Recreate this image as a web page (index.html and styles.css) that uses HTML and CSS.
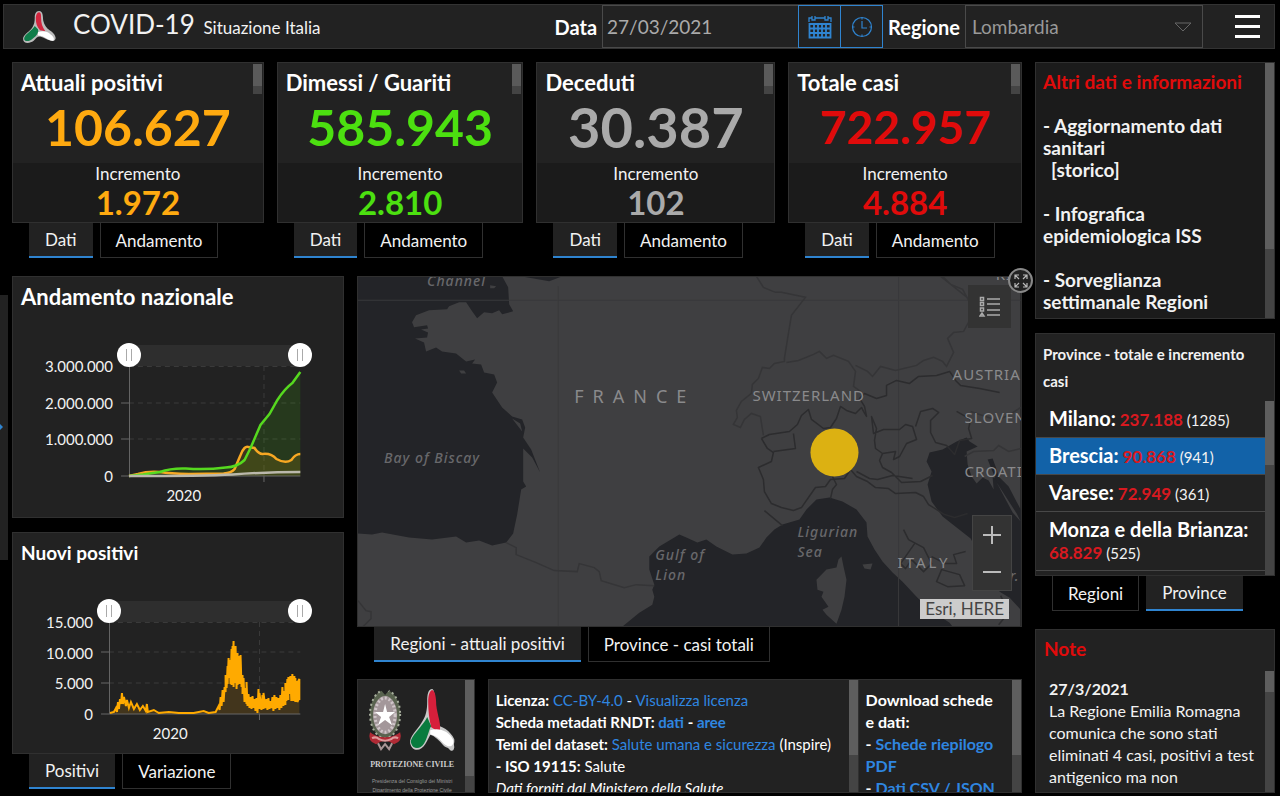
FILE: index.html
```html
<!DOCTYPE html>
<html lang="it">
<head>
    <meta charset="UTF-8">
    <meta name="viewport" content="width=device-width, initial-scale=1">
    <title>COVID-19 Situazione Italia</title>
    <link rel="stylesheet" href="styles.css">
</head>
<body>
    <!-- Intestazione -->
    <header class="header">
        <svg class="header-logo" viewBox="0 0 32 32" aria-hidden="true">
            <path d="M16 1c-3 0-4 3-4 6 0 4-.5 6-2 9-2 4-9 7-9 11 0 5 6 5 10 2 2-2 3-4 6-4 4 1 9 5 13 4 4-2 0-8-4-10-3-2-5-5-6-9-.5-4 0-9-4-9z" fill="#bbb"/>
            <path d="M16 2c-2 0-3 3-3 6 0 4 1 8 4 11l5 1c-3-4-4-8-4-12 0-3 0-6-2-6z" fill="#d3263f"/>
            <path d="M12 15c-2 4-10 8-10 12 0 3 5 3 8 0 4-3 6-6 5-9z" fill="#0f7d4a"/>
            <path d="M15 21c4-2 9-1 12 2 3 2 4 5 2 6-4 0-8-5-14-5z" fill="#fff"/>
        </svg>
        <h1 class="header-title">COVID-19 <small>Situazione Italia</small></h1>
        <div class="filters">
            <label class="filter-label" for="data">Data</label>
            <input class="filter-date" id="data" type="text" value="27/03/2021">
            <button class="icon-button" type="button" aria-label="Calendario">
                <svg width="24" height="24" viewBox="0 0 24 24" fill="none" stroke="#2f84d0" stroke-width="1.3">
                    <path d="M1 7V3h3m3 0h10m3 0h3v4M4 1v4h3V1M17 1v4h3V1"/>
                    <path d="M1.500 9h21v13.500h-21zM1.500 13.500h21M1.500 18h21M6 9v13.500M10 9v13.500M14 9v13.500M18 9v13.500" stroke-width="1.800"/>
                </svg>
            </button>
            <button class="icon-button" type="button" aria-label="Ora">
                <svg width="22" height="22" viewBox="0 0 22 22" fill="none" stroke="#2f84d0" stroke-width="1.200">
                    <circle cx="11" cy="11" r="9.500"/>
                    <path d="M11 5v7h5M11 1.500v2M11 18.500v2M1.500 11h2M18.500 11h2"/>
                </svg>
            </button>
            <label class="filter-label" for="regione">Regione</label>
            <div class="select-wrap">
                <select class="filter-select" id="regione">
                    <option>Lombardia</option>
                </select>
                <svg class="select-arrow" width="18" height="10" viewBox="0 0 18 10" fill="none" stroke="#666"><path d="M1 1h16L9 9z"/></svg>
            </div>
        </div>
        <button class="menu-button" type="button" aria-label="Menu"><span></span><span></span><span></span></button>
    </header>

    <!-- Linguetta laterale -->
    <button class="drawer" type="button" aria-label="Apri pannello"></button>

    <main class="dashboard">
        <div class="main-area">
            <!-- Indicatori -->
            <section class="stats">
                <div class="stat">
                    <div class="stat-card">
                        <h2 class="panel-title">Attuali positivi</h2>
                        <div class="stat-total orange">106.627</div>
                        <div class="stat-delta"><p>Incremento</p><strong class="orange">1.972</strong></div>
                        <span class="stat-scroll"></span>
                    </div>
                    <div class="tabs"><button class="tab active" type="button">Dati</button><button class="tab" type="button">Andamento</button></div>
                </div>
                <div class="stat">
                    <div class="stat-card">
                        <h2 class="panel-title">Dimessi / Guariti</h2>
                        <div class="stat-total green">585.943</div>
                        <div class="stat-delta"><p>Incremento</p><strong class="green">2.810</strong></div>
                        <span class="stat-scroll"></span>
                    </div>
                    <div class="tabs"><button class="tab active" type="button">Dati</button><button class="tab" type="button">Andamento</button></div>
                </div>
                <div class="stat">
                    <div class="stat-card">
                        <h2 class="panel-title">Deceduti</h2>
                        <div class="stat-total grey large">30.387</div>
                        <div class="stat-delta"><p>Incremento</p><strong class="grey">102</strong></div>
                        <span class="stat-scroll"></span>
                    </div>
                    <div class="tabs"><button class="tab active" type="button">Dati</button><button class="tab" type="button">Andamento</button></div>
                </div>
                <div class="stat">
                    <div class="stat-card">
                        <h2 class="panel-title">Totale casi</h2>
                        <div class="stat-total red small">722.957</div>
                        <div class="stat-delta"><p>Incremento</p><strong class="red">4.884</strong></div>
                        <span class="stat-scroll"></span>
                    </div>
                    <div class="tabs"><button class="tab active" type="button">Dati</button><button class="tab" type="button">Andamento</button></div>
                </div>
            </section>

            <div class="lower">
                <!-- Grafici -->
                <div class="charts">
                    <section class="panel chart-panel">
                        <h2 class="panel-title">Andamento nazionale</h2>
                        <div class="chart">
                            <div class="range">
                                <input type="range" min="0" max="100" value="0" aria-label="Inizio periodo">
                                <input type="range" min="0" max="100" value="100" aria-label="Fine periodo">
                            </div>
                            <div class="y-axis"><span>3.000.000</span><span>2.000.000</span><span>1.000.000</span><span>0</span></div>
                            <svg class="plot" viewBox="0 0 172 110" preserveAspectRatio="none">
                                <path class="guide" d="M0 .5H172M0 37H172M0 73H172M135.500 0V110"/>
                                <path d="M0 110L14 108.500 31 106 44 103.500 57 102.500 77 103 97 101.500 109 99.500 116 94 122 82 132 59 141 48 149 34 156 26 164 17 172 6V110z" fill="#4ce600" opacity=".12"/>
                                <path d="M0 110L101 107 106 103 112 89 118 81 126 82 132 88 142 89 151 94.500 157 96 164 93 172 88V110z" fill="#ffaa00" opacity=".12"/>
                                <path class="axis" d="M.5 0V110M-8 37H0M-8 73H0M-8 110H172M135.500 110v6"/>
                                <path d="M0 110L9 108Q19 105 31 106 41 107.500 60 108L95 107.500Q103 107 106 103L112 89Q116 79 120 81L126 82Q130 88 134 88 143 87 148 93 157 98 163 94 167 88 172 88" stroke="#f7a823"/>
                                <path d="M0 110L14 108.500 31 106Q42 102 57 102.500 77 104 97 101.500 109 101 116 94L122 82 132 59 141 48 149 34Q156 23 164 17L172 6" stroke="#56d91f"/>
                                <path d="M0 110Q75 110 104 108.500 140 106 172 106" stroke="#bbb8ac"/>
                            </svg>
                            <span class="x-axis">2020</span>
                        </div>
                    </section>

                    <section>
                        <div class="panel chart-panel daily">
                            <h2 class="panel-title medium">Nuovi positivi</h2>
                            <div class="chart">
                                <div class="range">
                                    <input type="range" min="0" max="100" value="0" aria-label="Inizio periodo">
                                    <input type="range" min="0" max="100" value="100" aria-label="Fine periodo">
                                </div>
                                <div class="y-axis"><span>15.000</span><span>10.000</span><span>5.000</span><span>0</span></div>
                                <svg class="plot" viewBox="0 0 192 92" preserveAspectRatio="none">
                                    <path class="guide" d="M0 .5H192M0 30H192M0 61H192M151 0V92"/>
                                    <path d="M0 92L9 84 13 78 20 84 40 89 107 91 114 80 119 60 126 50 131 60 139 80 150 82 173 80 183 72 191 70V92z" fill="#ffaa00" opacity=".15"/>
                                    <path class="axis" d="M.5 0V92M-8 30H0M-8 61H0M-8 92H192M151 92v6"/>
                                    <path d="M1 91L5 90 7 86 8 90 9 80 10 87 11 77 12 82 13 71 14 82 15 75 17 84 18 78 20 86 22 80 25 87 28 82 31 88 34 84 37 89 38 82 39 90 45 88 50 91 60 90 70 91 85 91 95 89 100 91 107 90 110 84 111 88 112 75 113 84 114 68 115 80 116 65 117 70 117 53 118 66 119 44 119 62 120 36 121 56 121 38 122 62 123 27 123 63 124 24 124 58 125 19 125 65 126 26 127 61 127 24 128 67 129 31 129 63 130 47 131 34 131 62 132 33 133 65 134 53 134 72 135 56 136 80 137 66 138 82 138 60 139 84 140 72 141 86 142 75 143 87 144 74 145 86 146 77 147 89 148 76 149 91 150 67 151 87 151 71 153 88 154 73 155 87 155 71 157 86 158 77 159 88 160 76 161 87 162 79 163 86 164 75 165 89 166 73 167 87 168 75 169 86 170 76 171 88 172 73 173 86 174 65 175 84 176 69 177 83 177 61 178 79 179 57 180 78 180 55 181 72 182 54 183 79 184 52 185 79 186 54 187 80 187 56 188 79 189 59 189 80 190 78 190 59 191 57 191 78" stroke="#ffaa00" stroke-width="2"/>
                                </svg>
                                <span class="x-axis">2020</span>
                            </div>
                        </div>
                        <div class="tabs"><button class="tab active" type="button">Positivi</button><button class="tab" type="button">Variazione</button></div>
                    </section>
                </div>

                <div class="center">
                    <!-- Mappa -->
                    <section class="map-block">
                        <div class="map">
                            <svg class="map-canvas" viewBox="0 0 662 350" preserveAspectRatio="xMidYMid slice">
                                <rect width="662" height="350" fill="#3f3f41"/>
                                <g fill="#232428">
                                    <path d="M0 0H144L150 11 151 28 155 35 144 38 141 34 134 37 126 36 119 42 114 35 108 26 101 26 91 30 89 33 71 34 58 39 54 46 56 51 69 49 70 52 63 53 70 56 69 61 57 62 66 66 68 75 78 71 84 75 98 77 108 85 117 83 114 87 123 88 126 96 136 98 139 106 134 116 144 131 154 140 164 143 167 151 165 161 173 173 182 196 174 181 165 172 165 205 168 210 163 213 159 238 155 257 148 266 134 269 121 264 108 266 98 260 74 263 51 261 24 256 14 258 0 257z"/>
                                    <path d="M163 0L174 2 191 5 204 0z"/>
                                    <path d="M264 350L281 336 294 328 296 320 294 313 296 308 291 293 291 280 301 270 321 258 328 261 339 266 348 263 358 270 374 278 388 277 401 271 408 261 416 253 424 248 441 243 448 233 458 223 471 221 484 225 498 233 508 246 509 260 516 273 524 285 534 296 544 305 558 320 571 333 591 346 594 350z"/>
                                    <path d="M568 185L571 176 584 173 598 165 608 161 611 165 619 170 608 175 609 188 613 200 618 207 624 201 630 204 635 213 634 201 641 201 650 210 662 233V333L651 321 641 315 612 262 598 251 584 240 573 225 569 208 573 195z"/>
                                    <path d="M629 183l5-1 4 11 5 17-5-5z"/>
                                </g>
                                <g fill="#3f3f41">
                                    <path d="M483 280L485 290 488 303 486 320 483 333 478 347 468 338 464 333 470 330 463 320 465 315 459 313 458 303 468 293 478 291 480 283z"/>
                                    <path d="M504 288l10-1-2 6-6-1zM101 94l5 0 2 3-5 0zM132 9l6 1-2 2-4 0zM154 142l8 5 2 8-7-9zM638 206l20 31 4 8-8-9z"/>
                                </g>
                                <g fill="none" stroke="#353537" stroke-width="1.500">
                                    <path d="M200 10V350M540 0V350M0 24H662" stroke="#39393b" stroke-width="1"/>
                                    <path d="M398 0l7 11 12 5 6 0 24 5-14 18-3 18-4 25v3l-10 2-5 5-7-1-4 11-6 6-1 9-10 8-5 9 1 7-4 7 7 3 4-8 7-6 9 3 3 19M428 86l12-2 15-6 6-3 7 7 7-3 15 6 7 10-2 15 7 5M497 89l12 6 5 5 8-10 15 4 21-5 7-5 10-3 9 4 4 5 7-14-6-14 6-6 10-1 6-11V23L582 0M606 180l9-5 20-1 5-5 10 6 12-3M612 135l15 5 12 4 14-7 9-6M584 0l8 8 12 5 6 11"/>
                                    <path d="M148 266l10 5 0 7 20 8 18 8 23 1 2-8 15 4 5 4 2 9 23 7 12-3 18 1M0 324l8 10 5 1v7l-8 8"/>
                                </g>
                                <g fill="none" stroke="#2c2c2e" stroke-width="1.500" stroke-linejoin="round">
                                    <path d="M403 162l8-4 20-3 8-7 4-9 7-6 3 10 12 9 7-1 6-9 4-12 6 4 9 3 6-6 2 4 3 5-2-10-5-8 5-5 12 5 10-3 0-10 10-5 13 3 9-7 18-1 13-4 6 9 5 5 19 3 20 4M403 162l6 10 6 4-2 9-13 6 5 12 1 12 7 12 10 4 12 3 8-3 7-10 7-10 10-1 5-7 14-1 6-9 6 7 11 5 8 6 13 1 7 5 20-1 8 4 5 8 16 10 10 3 13-4"/>
                                    <path d="M415 175l22-3-2-15M513 140l5 12-2 12 1 8 7 5 13-2-2 8 6-3 7-13 10-4-4-13-7-2-6 5-16 0-10 4zM557 150l5-15 12-3 6 4-8 8 0 12 5 10 11 3 8 9 5-14 12-2-3-10 2-9-14-8M524 177l-3 7 3 7 9 5 10 10 19-1 12-6M498 195l13 7 8 1 15-4 20 3M474 200l4 8-4 5-2 9M406 234l18 15M545 253l5 10 15 8 8 16-8 8-12-12-6 9-5-5 14-20M573 280l14 7 11 0-3-9 12-3M578 305l5-12 18 5 5 11-17 1zM640 348l10-12-8-17"/>
                                </g>
                                <circle cx="476" cy="176" r="24" fill="#dcb112"/>
                                <g class="sea-labels">
                                    <text x="69" y="10">Channel</text>
                                    <text x="26" y="186">Bay of Biscay</text>
                                    <text x="297" y="283">Gulf of</text>
                                    <text x="297" y="303">Lion</text>
                                    <text x="439" y="260">Ligurian</text>
                                    <text x="439" y="280">Sea</text>
                                    <text x="651" y="304">r.</text>
                                </g>
                                <g class="country-labels">
                                    <text class="spaced" x="216" y="127">FRANCE</text>
                                    <text x="394" y="125">SWITZERLAND</text>
                                    <text x="594" y="104">AUSTRIA</text>
                                    <text x="606" y="147">SLOVEN</text>
                                    <text x="606" y="200">CROATI</text>
                                    <text class="italy" x="539" y="291">ITALY</text>
                                    <text x="637" y="4">KI</text>
                                </g>
                            </svg>
                            <button class="map-legend" type="button" aria-label="Legenda">
                                <svg width="22" height="22" viewBox="0 0 22 22" fill="none" stroke="#aaa" stroke-width="1.500">
                                    <path d="M8 3h13M8 8h13M8 14h13M8 19h13"/>
                                    <path d="M1.500 1.500h3v3h-3zM1.500 6.500h3v3h-3zM1.500 12h3v3h-3zM1 20l2-3 2 3z"/>
                                </svg>
                            </button>
                            <div class="map-zoom">
                                <button type="button" aria-label="Zoom avanti"><svg width="18" height="18" viewBox="0 0 18 18" stroke="#bbb" stroke-width="2"><path d="M0 9h18M9 0v18"/></svg></button>
                                <button type="button" aria-label="Zoom indietro"><svg width="18" height="18" viewBox="0 0 18 18" stroke="#bbb" stroke-width="2"><path d="M0 9h18"/></svg></button>
                            </div>
                            <span class="map-credits">Esri, HERE</span>
                        </div>
                        <button class="expand" type="button" aria-label="Espandi">
                            <svg width="14" height="14" viewBox="0 0 14 14" fill="none" stroke="#bbb" stroke-width="1.200"><path d="M1 5V1h4M1 1l4 4M9 1h4v4M13 1L9 5M1 9v4h4M1 13l4-4M13 9v4H9M13 13L9 9"/></svg>
                        </button>
                        <div class="tabs"><button class="tab active" type="button">Regioni - attuali positivi</button><button class="tab" type="button">Province - casi totali</button></div>
                    </section>

                    <!-- Piede -->
                    <section class="footer">
                        <div class="panel scroll-panel logo-panel">
                            <svg viewBox="0 0 106 112" preserveAspectRatio="xMidYMin slice">
                                <ellipse cx="27" cy="34" rx="15" ry="24" fill="#59634f"/>
                                <ellipse cx="27" cy="34" rx="15" ry="24" fill="none" stroke="#a9b09f" stroke-width="2" stroke-dasharray="2 3"/>
                                <ellipse cx="27" cy="35" rx="12" ry="19" fill="#a3979a"/>
                                <ellipse cx="27" cy="35" rx="10" ry="17" fill="none" stroke="#d0c6c9" stroke-width="3" stroke-dasharray="2 2"/>
                                <path d="M22 9h10l-5 6z" fill="#222"/>
                                <path d="M12 52q-3 9 6 12 9-7 18 0 9-3 6-12-6 5-15 5t-15-5z" fill="#b02a35"/>
                                <path d="M14 58q4-2 7 1 6 3 12 0 3-3 7-1" fill="none" stroke="#e09a9c" stroke-width="2"/>
                                <path d="M20 63l3 6 4-5 4 5 3-6" fill="none" stroke="#a99696" stroke-width="2"/>
                                <path d="M27 24l2 8h8l-6 5 3 8-7-5-7 5 3-8-6-5h8z" fill="#fff"/>
                                <path d="M74 9c-4 0-5 5-5 12 0 9-1 15-6 22-4 7-12 13-11 20 2 9 11 8 15 1 4-6 5-12 10-14 3 4 7 6 9 11 4 9 9 13 10 6 0-8-7-12-13-18-5-6-5-15-6-24 0-7-1-16-3-16z" fill="#c9c9c9"/>
                                <path d="M71 46c9-3 20 3 25 13 1 9-6 11-11 6-4-5-8-9-14-11z" fill="#c9c9c9"/>
                                <path d="M74 10c-3 1-4 6-4 12 0 9 1 18 3 25l8 5c3-6-2-17-3-27 0-7-1-14-4-15z" fill="#d61f3b"/>
                                <path d="M69 37c-4 9-18 20-16 26 2 7 10 6 13 0 4-7 5-15 7-17z" fill="#087b3e"/>
                                <path d="M72 50c9-3 19 1 23 10 1 7-5 8-10 3-4-5-8-8-13-9z" fill="#fff"/>
                                <text class="logo-name" x="54" y="87">PROTEZIONE CIVILE</text>
                                <text class="logo-sub" x="54" y="103">Presidenza del Consiglio dei Ministri</text>
                                <text class="logo-sub" x="54" y="112">Dipartimento della Protezione Civile</text>
                            </svg>
                            <span class="scrollbar"><i class="thumb thumb-logo"></i></span>
                        </div>
                        <div class="panel scroll-panel">
                            <div class="info">
                                <p><b>Licenza:</b> <a href="#">CC-BY-4.0</a> - <a href="#">Visualizza licenza</a></p>
                                <p><b>Scheda metadati RNDT: <a href="#">dati</a> - <a href="#">aree</a></b></p>
                                <p><b>Temi del dataset:</b> <a href="#">Salute umana e sicurezza</a> (Inspire)</p>
                                <p><b>- ISO 19115:</b> Salute</p>
                                <p><em>Dati forniti dal Ministero della Salute</em></p>
                            </div>
                            <span class="scrollbar"><i class="thumb thumb-info"></i></span>
                        </div>
                        <div class="panel scroll-panel joined">
                            <div class="info downloads">
                                <p>Download schede e dati:</p>
                                <p>- <a href="#">Schede riepilogo PDF</a></p>
                                <p>- <a href="#">Dati CSV / JSON</a></p>
                            </div>
                            <span class="scrollbar"><i class="thumb thumb-info"></i></span>
                        </div>
                    </section>
                </div>
            </div>
        </div>

        <!-- Colonna destra -->
        <aside class="sidebar">
            <section class="panel scroll-panel dark">
                <div class="links">
                    <h2 class="red">Altri dati e informazioni</h2>
                    <p>- <a href="#">Aggiornamento dati sanitari</a><br><a class="indent" href="#">[storico]</a></p>
                    <p>- <a href="#">Infografica epidemiologica ISS</a></p>
                    <p>- <a href="#">Sorveglianza settimanale Regioni</a></p>
                </div>
                <span class="scrollbar"><i class="thumb thumb-links"></i></span>
            </section>

            <section class="provinces">
                <div class="panel province-panel">
                    <h2 class="province-title">Province - totale e incremento casi</h2>
                    <div class="scroll-panel">
                        <ul class="province-list">
                            <li><b>Milano:</b> <strong>237.188</strong> (1285)</li>
                            <li class="selected"><b>Brescia:</b> <strong>90.868</strong> (941)</li>
                            <li><b>Varese:</b> <strong>72.949</strong> (361)</li>
                            <li><b>Monza e della Brianza:</b> <strong>68.829</strong> (525)</li>
                        </ul>
                        <span class="scrollbar"><i class="thumb thumb-province"></i></span>
                    </div>
                </div>
                <div class="tabs"><button class="tab" type="button">Regioni</button><button class="tab active" type="button">Province</button></div>
            </section>

            <section class="panel notes">
                <h2 class="red">Note</h2>
                <div class="scroll-panel">
                    <div class="notes-text">
                        <b>27/3/2021</b>
                        <p>La Regione Emilia Romagna comunica che sono stati eliminati 4 casi, positivi a test antigenico ma non</p>
                    </div>
                    <span class="scrollbar"><i class="thumb thumb-notes"></i></span>
                </div>
            </section>
        </aside>
    </main>
</body>
</html>
```
FILE: styles.css
```css
* {
    margin: 0;
    padding: 0;
    box-sizing: border-box;
}

body {
    height: 100vh;
    padding: 4px 5px 3px 3px;
    display: flex;
    flex-direction: column;
    background: #000;
    color: #f2f2f2;
    font-family: Lato, "Open Sans", sans-serif;
    font-size: 16px;
    overflow: hidden;
}

button, input, select {
    font-family: inherit;
    color: inherit;
    background: none;
    border: none;
    border-radius: 0;
}

button {
    cursor: pointer;
}

a {
    color: #2f86e0;
    text-decoration: none;
}

.orange { color: #ffaa10; }
.green { color: #4ce010; }
.grey { color: #aaa; }
.red { color: #e00b0b; }

/* Intestazione */
.header {
    display: flex;
    align-items: center;
    flex: none;
    height: 45px;
    padding: 0 14px 0 18px;
    background: #222;
    border: 1px solid #333;
}

.header-logo {
    width: 34px;
    height: 34px;
}

.header-title {
    flex: 1;
    padding-left: 17px;
    font-size: 26px;
    line-height: 32px;
    padding-bottom: 2px;
    font-weight: 400;
    white-space: nowrap;
}

.header-title small {
    font-size: 17px;
    padding-left: 2px;
}

.filters {
    display: flex;
    align-items: center;
}

.filter-label {
    padding: 0 5px;
    font-size: 20px;
    font-weight: 700;
    color: #fff;
}

.filter-date {
    width: 197px;
    height: 43px;
    padding-left: 4px;
    border: 1px solid #4a4a4a;
    color: #aaa;
    font-size: 19px;
}

.icon-button {
    display: flex;
    align-items: center;
    justify-content: center;
    width: 43px;
    height: 43px;
    margin-left: -1px;
    border: 1px solid #2f84d0;
}

.select-wrap {
    position: relative;
}

.filter-select {
    width: 238px;
    height: 43px;
    padding-left: 6px;
    appearance: none;
    border: 1px solid #4a4a4a;
    color: #999;
    font-size: 19px;
}

.select-arrow {
    position: absolute;
    right: 11px;
    top: 17px;
    pointer-events: none;
}

.menu-button {
    display: flex;
    flex-direction: column;
    gap: 7px;
    width: 25px;
    margin-left: 32px;
}

.menu-button span {
    height: 3px;
    background: #fff;
}

.drawer {
    position: absolute;
    left: 0;
    top: 295px;
    width: 8px;
    height: 265px;
    background: #222;
}

.drawer::before {
    content: '';
    position: absolute;
    left: 0;
    top: 129px;
    border: 3px solid transparent;
    border-left-color: #2f84d0;
}

/* Struttura */
.dashboard {
    flex: 1;
    min-height: 0;
    display: grid;
    grid-template-columns: 1fr 240px;
    gap: 13px;
    padding: 13px 0 0 9px;
}

.main-area {
    display: flex;
    flex-direction: column;
    gap: 18px;
    min-height: 0;
}

.lower {
    flex: 1;
    min-height: 0;
    display: grid;
    grid-template-columns: 1fr 2fr;
    gap: 13px;
}

.panel {
    background: #222;
    border: 1px solid #303030;
}

.panel-title {
    font-size: 22px;
    line-height: 24px;
    font-weight: 700;
    color: #fff;
}

.panel-title.medium {
    font-size: 19px;
}

/* Schede sotto i pannelli */
.tabs {
    display: flex;
    gap: 7px;
    padding-left: 17px;
}

.tab {
    height: 35px;
    padding: 0 15px;
    border: 1px solid #303030;
    border-top: none;
    font-size: 17px;
    white-space: nowrap;
}

.tab.active {
    padding: 0 16px;
    background: #222;
    border: none;
    border-bottom: 2px solid #2f84d0;
}

/* Indicatori */
.stats {
    display: grid;
    grid-template-columns: 252fr 247fr 239fr 234fr;
    gap: 13px;
}

.stat-card {
    position: relative;
    height: 161px;
    display: flex;
    flex-direction: column;
    background: #222;
    border: 1px solid #303030;
    text-align: center;
}

.stat-card .panel-title {
    padding: 8px 8px 0;
    text-align: left;
}

.stat-total {
    flex: 1;
    font-size: 50px;
    line-height: 64px;
    font-weight: 700;
}

.stat-total.large { font-size: 56px; }
.stat-total.small { font-size: 46px; }

.stat-delta {
    background: #1b1b1b;
    height: 59px;
}

.stat-delta p {
    font-size: 17px;
    line-height: 22px;
}

.stat-delta strong {
    display: block;
    font-size: 33px;
    line-height: 34px;
}

.stat-scroll {
    position: absolute;
    top: 1px;
    right: 1px;
    width: 9px;
    height: 30px;
    background: #5a5a5a;
    border-bottom: 8px solid #444;
}

/* Grafici */
.charts {
    display: flex;
    flex-direction: column;
    gap: 14px;
}

.chart-panel {
    height: 242px;
    padding-top: 8px;
}

.chart-panel.daily {
    height: 222px;
}

.chart-panel .panel-title {
    padding-left: 8px;
}

.chart {
    display: grid;
    grid-template-columns: 100px 1fr;
    column-gap: 16px;
    padding: 34px 43px 0 0;
}

.daily .chart {
    grid-template-columns: 80px 1fr;
}

.range {
    grid-column: 2;
    position: relative;
    height: 23px;
    background: linear-gradient(#2e2e2e, #2e2e2e) 0 2px / 100% 21px no-repeat;
}

.range input {
    position: absolute;
    left: -12px;
    top: 0;
    width: calc(100% + 24px);
    height: 24px;
    appearance: none;
    pointer-events: none;
    z-index: 1;
}

.range input::-webkit-slider-thumb {
    appearance: none;
    pointer-events: auto;
    width: 24px;
    height: 24px;
    border-radius: 50%;
    background:
        linear-gradient(#aaa, #aaa) 9px 6px / 1px 12px no-repeat,
        linear-gradient(#aaa, #aaa) 14px 6px / 1px 12px no-repeat,
        #fff;
}

.y-axis {
    display: flex;
    flex-direction: column;
    justify-content: space-between;
    margin: -9px 0;
    text-align: right;
    font-size: 15px;
    line-height: 18px;
}

.plot {
    width: 100%;
    height: 110px;
    overflow: visible;
    fill: none;
    stroke-width: 2.5;
}

.daily .plot {
    height: 92px;
}

.guide {
    stroke: #3a3a3a;
    stroke-width: 1;
    stroke-dasharray: 5 4;
}

.axis {
    stroke: #666;
    stroke-width: 1;
}

.x-axis {
    grid-column: 2;
    width: 64%;
    padding-top: 10px;
    text-align: center;
    font-size: 15px;
    line-height: 18px;
}

/* Mappa */
.center {
    display: flex;
    flex-direction: column;
    gap: 17px;
    min-height: 0;
}

.map-block {
    position: relative;
    flex: 1;
    min-height: 0;
    display: flex;
    flex-direction: column;
}

.map {
    position: relative;
    flex: 1;
    min-height: 0;
    border: 1px solid #303030;
    overflow: hidden;
}

.map-canvas {
    position: absolute;
    width: 100%;
    height: 100%;
}

.sea-labels {
    fill: #68686b;
    font: italic 500 14px "Noto Sans", sans-serif;
    letter-spacing: 1px;
}

.country-labels {
    fill: #8a8a8c;
    font: 15px "Noto Sans", sans-serif;
    letter-spacing: 1px;
}

.country-labels .spaced {
    font-size: 18px;
    letter-spacing: 9px;
}

.country-labels .italy {
    letter-spacing: 3px;
}

.map-legend {
    position: absolute;
    top: 8px;
    right: 10px;
    display: flex;
    align-items: center;
    justify-content: center;
    width: 43px;
    height: 43px;
    background: #333;
}

.map-zoom {
    position: absolute;
    right: 9px;
    bottom: 35px;
    display: flex;
    flex-direction: column;
    background: #333;
    border: 1px solid #444;
}

.map-zoom button {
    display: flex;
    align-items: center;
    justify-content: center;
    width: 38px;
    height: 37px;
}

.map-credits {
    position: absolute;
    right: 12px;
    bottom: 7px;
    padding: 0 5px;
    background: #ccc;
    color: #444;
    font-size: 17px;
    line-height: 20px;
}

.expand {
    position: absolute;
    top: -8px;
    right: -11px;
    display: flex;
    align-items: center;
    justify-content: center;
    width: 25px;
    height: 25px;
    background: #222;
    border: 2px solid #888;
    border-radius: 50%;
}

/* Pannelli con barra di scorrimento */
.scroll-panel {
    display: flex;
    min-height: 0;
    overflow: hidden;
}

.scroll-panel > :first-child {
    flex: 1;
    min-width: 0;
}

.scrollbar {
    flex: none;
    width: 9px;
    background: #444;
}

.thumb {
    display: block;
    background: #5e5e5e;
}

.thumb-logo { height: 86%; }
.thumb-info { height: 67%; }
.thumb-links { height: 73%; }
.thumb-province { height: 37%; }
.thumb-notes { height: 17%; }

/* Piede */
.footer {
    flex: none;
    height: 114px;
    display: grid;
    grid-template-columns: 130fr 370fr 163fr;
}

.footer .logo-panel {
    margin-right: 13px;
}

.footer .joined {
    border-left: none;
}

.logo-name {
    fill: #ccc;
    font: bold 8px "Liberation Serif", serif;
    text-anchor: middle;
}

.logo-sub {
    fill: #999;
    font: 5px "Liberation Sans", sans-serif;
    text-anchor: middle;
}

.info {
    padding: 9px 0 0 7px;
    font-size: 15px;
    line-height: 22px;
    color: #fff;
}

.downloads {
    padding-right: 16px;
    font-size: 16px;
    font-weight: 700;
}

/* Colonna destra */
.sidebar {
    display: grid;
    grid-template-rows: 257fr 278fr 168fr;
    row-gap: 14px;
    min-height: 0;
}

.dark {
    background: #1b1b1b;
}

.links {
    padding: 8px 8px 0 7px;
    font-size: 19px;
    line-height: 22px;
    font-weight: 700;
}

.links h2 {
    font-size: 19px;
    line-height: 22px;
}

.links a {
    color: inherit;
}

.links p {
    margin-top: 22px;
}

.links .indent {
    padding-left: 8px;
}

.provinces {
    display: flex;
    flex-direction: column;
    min-height: 0;
}

.province-panel {
    flex: 1;
    min-height: 0;
    display: flex;
    flex-direction: column;
}

.province-title {
    padding: 7px 7px 6px;
    font-size: 15px;
    line-height: 27px;
}

.province-panel .scroll-panel {
    flex: 1;
}

.province-list {
    list-style: none;
    font-size: 15px;
    line-height: 22px;
}

.province-list li {
    padding: 6px 12px 6px 13px;
    border-bottom: 1px solid #484848;
}

.province-list b {
    font-size: 20px;
    color: #fff;
}

.province-list strong {
    color: #d81920;
    font-size: 17px;
}

.province-list .selected {
    background: #1262a8;
}

.notes {
    display: flex;
    flex-direction: column;
    min-height: 0;
    margin-top: 4px;
}

.notes h2 {
    padding: 8px 8px 11px;
    font-size: 19px;
    line-height: 22px;
}

.notes .scroll-panel {
    flex: 1;
}

.notes-text {
    padding: 7px 0 0 13px;
    font-size: 16px;
    line-height: 22px;
}
```
